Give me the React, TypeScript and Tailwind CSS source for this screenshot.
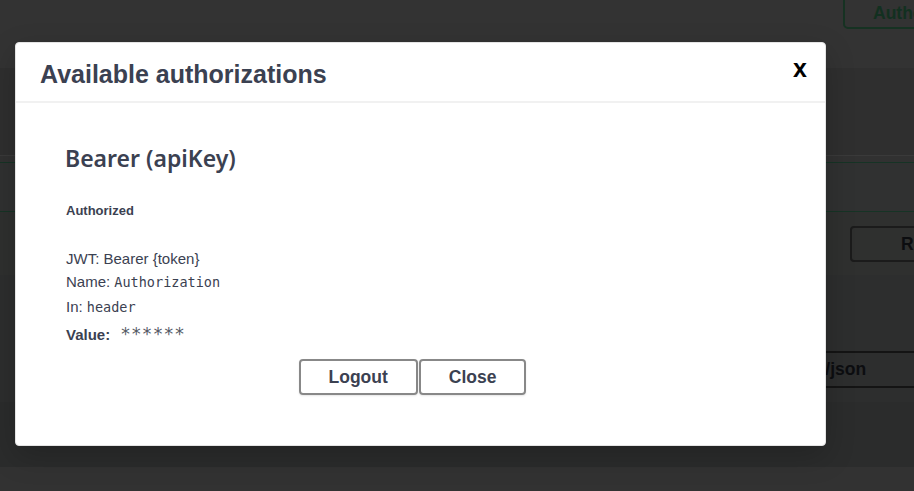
import React from "react";

const sans = { fontFamily: '"Liberation Sans", Arial, sans-serif' };

function Backdrop() {
  return (
    <div className="flex flex-col w-[914px] h-[491px]" style={sans}>
      {/* top bar with authorize button */}
      <div className="h-[68px] bg-[#333333] flex pl-[843px] shrink-0">
        <div className="shrink-0 w-[140px] h-[39px] -mt-[10px] border-2 border-[#163222] rounded-[5px] pl-[28px] pt-[10px] text-[17.5px] font-bold text-[#123020] leading-[22px]">
          Authorize
        </div>
      </div>
      <div className="h-[87px] bg-[#2f2f2f] shrink-0" />
      <div className="h-[7px] bg-[#313131] border-t border-[#3a3a3a] shrink-0" />
      {/* operation summary */}
      <div className="h-[50px] bg-[#303131] border-y border-[#163325] shrink-0" />
      <div className="h-[63px] bg-[#2f302f] flex pl-[850px] pt-[14px] shrink-0">
        <div className="shrink-0 w-[120px] h-[36px] border-2 border-[#1b1b1b] rounded-[4px] pl-[49px] text-[17.5px] font-bold text-[#0c0d10] leading-[32px]">
          Reset
        </div>
      </div>
      <div className="h-[63px] bg-[#2d2e2e] shrink-0" />
      <div className="h-[64px] bg-[#2d2e2e] flex pl-[722px] pt-[13px] shrink-0">
        <div className="shrink-0 w-[260px] h-[37px] border-y-2 border-[#141414] pl-[11px] text-[17.5px] font-bold text-[#0c0d10] leading-[33px]">
          application/json
        </div>
      </div>
      <div className="h-[65px] bg-[#2b2c2c] shrink-0" />
      <div className="flex-1 bg-[#323232]" />
    </div>
  );
}

function AuthModal() {
  return (
    <div
      className="w-[811px] h-[404px] bg-white rounded-[4px] border border-[#e4e4e4] shadow-[0_10px_30px_rgba(0,0,0,0.2)] flex flex-col"
      style={sans}
    >
      {/* Header */}
      <div className="h-[60px] shrink-0 flex items-start justify-between pl-[24px] pr-[18px] border-b-2 border-[#f1f1f1]">
        <h3 className="mt-[19px] text-[25px] leading-none font-bold text-[#3b4151]">Available authorizations</h3>
        <button className="mt-[13px] text-[25px] leading-none font-bold text-black">x</button>
      </div>

      {/* Content */}
      <div className="pl-[50px] pt-[41px] flex flex-col">
        <h4
          className="-ml-[1px] text-[23px] leading-[28px] font-semibold text-[#3b4151]"
          style={{ fontFamily: '"Noto Sans", "Open Sans", sans-serif' }}
        >
          Bearer (apiKey)
        </h4>
        <h6 className="mt-[31px] text-[13px] leading-[16px] font-bold text-[#3b4151]">Authorized</h6>

        <div className="mt-[28px] text-[15px] leading-[23.33px] text-[#3b4151]">
          <p>JWT: Bearer {"{token}"}</p>
          <p>
            Name:{" "}
            <code className="text-[13.5px]" style={{ fontFamily: '"DejaVu Sans Mono", monospace' }}>
              Authorization
            </code>
          </p>
          <p>
            In:{" "}
            <code className="text-[13.5px]" style={{ fontFamily: '"DejaVu Sans Mono", monospace' }}>
              header
            </code>
          </p>
          <div className="mt-[4px] flex items-start">
            <label className="font-bold">Value:</label>
            <code
              className="ml-[10px] text-[17.5px] leading-[23px] tracking-[0.3px] text-[#555a66]"
              style={{ fontFamily: '"DejaVu Sans Mono", monospace' }}
            >
              ******
            </code>
          </div>
        </div>
      </div>

      {/* Buttons */}
      <div className="mt-[13px] flex justify-center gap-[1px] pr-[16px]">
        <button className="h-[36px] px-[28px] border-2 border-[#888888] rounded-[4px] shadow-[0_1px_2px_rgba(0,0,0,0.1)] text-[17.5px] font-bold text-[#3b4151]">
          Logout
        </button>
        <button className="h-[36px] px-[28px] border-2 border-[#888888] rounded-[4px] shadow-[0_1px_2px_rgba(0,0,0,0.1)] text-[17.5px] font-bold text-[#3b4151]">
          Close
        </button>
      </div>
    </div>
  );
}

export default function App() {
  return (
    <div className="relative w-[914px] h-[491px] overflow-hidden bg-[#2f2f2f]">
      <Backdrop />
      {/* Modal overlay */}
      <div className="absolute inset-0 pl-[15px] pt-[42px]">
        <AuthModal />
      </div>
    </div>
  );
}
